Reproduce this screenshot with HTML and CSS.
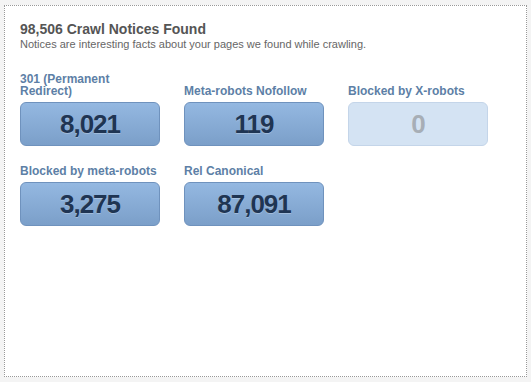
FILE: index.html
```html
<!DOCTYPE html>
<html lang="en">
<head>
    <meta charset="UTF-8">
    <title>Crawl Notices</title>
    <link rel="stylesheet" href="styles.css">
</head>
<body>
    <div class="panel">
        <h2 class="title">98,506 Crawl Notices Found</h2>
        <p class="subtitle">Notices are interesting facts about your pages we found while crawling.</p>

        <div class="notices">
            <div class="notice">
                <div class="notice-label">301 (Permanent Redirect)</div>
                <div class="notice-count">8,021</div>
            </div>
            <div class="notice">
                <div class="notice-label">Meta-robots Nofollow</div>
                <div class="notice-count">119</div>
            </div>
            <div class="notice empty">
                <div class="notice-label">Blocked by X-robots</div>
                <div class="notice-count">0</div>
            </div>
            <div class="notice">
                <div class="notice-label">Blocked by meta-robots</div>
                <div class="notice-count">3,275</div>
            </div>
            <div class="notice">
                <div class="notice-label">Rel Canonical</div>
                <div class="notice-count">87,091</div>
            </div>
        </div>
    </div>
</body>
</html>
```

FILE: styles.css
```css
body {
    margin: 0;
    padding: 5px 4px;
    background: #f4f4f4;
    font-family: 'Liberation Sans', Arial, sans-serif;
}

.panel {
    height: 372px;
    box-sizing: border-box;
    border: 1px dotted #999;
    background: #fff;
    padding: 15px 15px;
}

.title {
    margin: 0;
    font-size: 14px;
    line-height: 16px;
    font-weight: bold;
    color: #555;
}

.subtitle {
    margin: 0;
    font-size: 11px;
    line-height: 14px;
    color: #666;
}

.notices {
    display: grid;
    grid-template-columns: repeat(3, 140px);
    column-gap: 24px;
    row-gap: 19px;
    align-items: end;
    margin-top: 22px;
}

.notice-label {
    font-size: 12px;
    line-height: 12px;
    font-weight: bold;
    color: #5d7fa6;
    margin-bottom: 5px;
}

.notice-count {
    height: 42px;
    line-height: 42px;
    text-align: center;
    border: 1px solid #6f92bd;
    border-radius: 6px;
    background: linear-gradient(#94b8e1, #7b9fc9);
    color: #1f3553;
    font-size: 26px;
    letter-spacing: -1px;
    font-weight: bold;
    text-shadow: 0 1px 0 rgba(255, 255, 255, 0.25);
}

.empty .notice-count {
    border-color: #c4d5e9;
    background: #d4e3f3;
    color: #a7aeb6;
    text-shadow: none;
}
```
